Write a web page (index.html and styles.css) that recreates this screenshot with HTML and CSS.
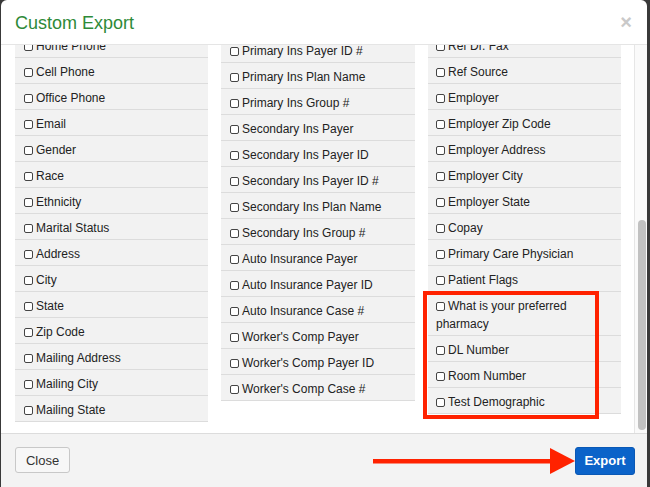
FILE: index.html
```html
<!DOCTYPE html>
<html lang="en">
<head>
<meta charset="utf-8">
<title>Custom Export</title>
<link rel="stylesheet" href="styles.css">
</head>
<body>
<div class="modal">
  <div class="modal-header">
    <h4 class="modal-title">Custom Export</h4>
    <span class="close">&times;</span>
  </div>
  <div class="modal-body">
    <div class="columns">
      <div class="col col-a">
        <div class="row"><span class="cb"></span>Home Phone</div>
        <div class="row"><span class="cb"></span>Cell Phone</div>
        <div class="row"><span class="cb"></span>Office Phone</div>
        <div class="row"><span class="cb"></span>Email</div>
        <div class="row"><span class="cb"></span>Gender</div>
        <div class="row"><span class="cb"></span>Race</div>
        <div class="row"><span class="cb"></span>Ethnicity</div>
        <div class="row"><span class="cb"></span>Marital Status</div>
        <div class="row"><span class="cb"></span>Address</div>
        <div class="row"><span class="cb"></span>City</div>
        <div class="row"><span class="cb"></span>State</div>
        <div class="row"><span class="cb"></span>Zip Code</div>
        <div class="row"><span class="cb"></span>Mailing Address</div>
        <div class="row"><span class="cb"></span>Mailing City</div>
        <div class="row"><span class="cb"></span>Mailing State</div>
      </div>
      <div class="col col-b">
        <div class="row"><span class="cb"></span>Primary Ins Payer ID #</div>
        <div class="row"><span class="cb"></span>Primary Ins Plan Name</div>
        <div class="row"><span class="cb"></span>Primary Ins Group #</div>
        <div class="row"><span class="cb"></span>Secondary Ins Payer</div>
        <div class="row"><span class="cb"></span>Secondary Ins Payer ID</div>
        <div class="row"><span class="cb"></span>Secondary Ins Payer ID #</div>
        <div class="row"><span class="cb"></span>Secondary Ins Plan Name</div>
        <div class="row"><span class="cb"></span>Secondary Ins Group #</div>
        <div class="row"><span class="cb"></span>Auto Insurance Payer</div>
        <div class="row"><span class="cb"></span>Auto Insurance Payer ID</div>
        <div class="row"><span class="cb"></span>Auto Insurance Case #</div>
        <div class="row"><span class="cb"></span>Worker's Comp Payer</div>
        <div class="row"><span class="cb"></span>Worker's Comp Payer ID</div>
        <div class="row"><span class="cb"></span>Worker's Comp Case #</div>
      </div>
      <div class="col col-c">
        <div class="row"><span class="cb"></span>Ref Dr. Fax</div>
        <div class="row"><span class="cb"></span>Ref Source</div>
        <div class="row"><span class="cb"></span>Employer</div>
        <div class="row"><span class="cb"></span>Employer Zip Code</div>
        <div class="row"><span class="cb"></span>Employer Address</div>
        <div class="row"><span class="cb"></span>Employer City</div>
        <div class="row"><span class="cb"></span>Employer State</div>
        <div class="row"><span class="cb"></span>Copay</div>
        <div class="row"><span class="cb"></span>Primary Care Physician</div>
        <div class="row"><span class="cb"></span>Patient Flags</div>
        <div class="row"><span class="cb"></span>What is your preferred pharmacy</div>
        <div class="row"><span class="cb"></span>DL Number</div>
        <div class="row"><span class="cb"></span>Room Number</div>
        <div class="row"><span class="cb"></span>Test Demographic</div>
      </div>
    </div>
    <div class="scroll-track"><div class="scroll-thumb"></div></div>
    <div class="highlight"></div>
  </div>
  <div class="modal-footer">
    <button class="btn btn-default">Close</button>
    <svg class="arrow" width="202" height="26" viewBox="0 0 202 26" aria-hidden="true">
      <rect x="0" y="11" width="180" height="4.5" fill="#ff2200"/>
      <polygon points="177,0 202,13 177,26" fill="#ff2200"/>
    </svg>
    <button class="btn btn-primary">Export</button>
  </div>
</div>
</body>
</html>
```
FILE: styles.css
```css
* { box-sizing: border-box; }
html, body { margin: 0; padding: 0; }
body {
  background: #393939;
  width: 650px;
  height: 487px;
  overflow: hidden;
  font-family: "Liberation Sans", Arial, Helvetica, sans-serif;
  color: #222;
}
.modal {
  margin-left: 1px;
  width: 646px;
  height: 487px;
  background: #fff;
  border-radius: 6px 6px 0 0;
  display: flex;
  flex-direction: column;
  overflow: hidden;
}
.modal-header {
  height: 45px;
  flex: none;
  border-bottom: 1px solid #e5e5e5;
  display: flex;
  align-items: center;
  justify-content: space-between;
  padding: 0 15px 0 14px;
}
.modal-title {
  margin: 0;
  font-size: 18px;
  font-weight: normal;
  color: #2e8a38;
  line-height: 20px;
  padding-top: 2px;
}
.close {
  font-size: 20px;
  font-weight: bold;
  color: #c9c9c9;
  line-height: 20px;
}
.modal-body {
  height: 388px;
  flex: none;
  display: flex;
  position: relative;
  overflow: hidden;
}
.columns {
  display: flex;
  gap: 13px;
  padding-left: 14px;
  width: 633px;
  overflow: hidden;
  align-items: flex-start;
}
.col { flex: none; width: 193px; font-size: 12px; }
.col-b { width: 194px; }
.col-a { margin-top: -13px; }
.col-b { margin-top: -8px; }
.col-c { margin-top: -13px; }
.row {
  background: #f2f2f2;
  border-bottom: 1px solid #dcdcdc;
  padding: 5px 6px 2px 9px;
  line-height: 18px;
}
.col-c .row { padding-left: 8px; }
.cb {
  display: inline-block;
  width: 9px;
  height: 9px;
  border: 1px solid #444;
  border-radius: 2px;
  margin-right: 3px;
  vertical-align: -1px;
  background: #fff;
}
.scroll-track {
  width: 13px;
  flex: none;
  background: #fafafa;
  border-left: 1px solid #e6e6e6;
  padding: 175px 0 0 3px;
}
.scroll-thumb {
  width: 8px;
  height: 210px;
  border-radius: 4px;
  background: #c1c1c1;
}
.highlight {
  position: absolute;
  left: 422px;
  top: 246px;
  width: 176px;
  height: 128px;
  border: 4px solid #ff2200;
}
.modal-footer {
  flex: 1;
  background: #f3f3f3;
  border-top: 1px solid #dcdcdc;
  display: flex;
  align-items: center;
  padding: 0 12px 0 14px;
}
.btn {
  font-family: "Liberation Sans", Arial, Helvetica, sans-serif;
  font-size: 13px;
  border-radius: 3px;
  padding: 0;
  cursor: pointer;
}
.btn-default {
  width: 55px;
  height: 26px;
  background: #f7f7f7;
  border: 1px solid #c8c8c8;
  color: #333;
  margin-top: -1px;
}
.arrow {
  margin-left: auto;
  display: block;
}
.btn-primary {
  width: 60px;
  height: 28px;
  background: #0b63c9;
  border: 1px solid #0a58b5;
  color: #fff;
  font-weight: bold;
}
```
